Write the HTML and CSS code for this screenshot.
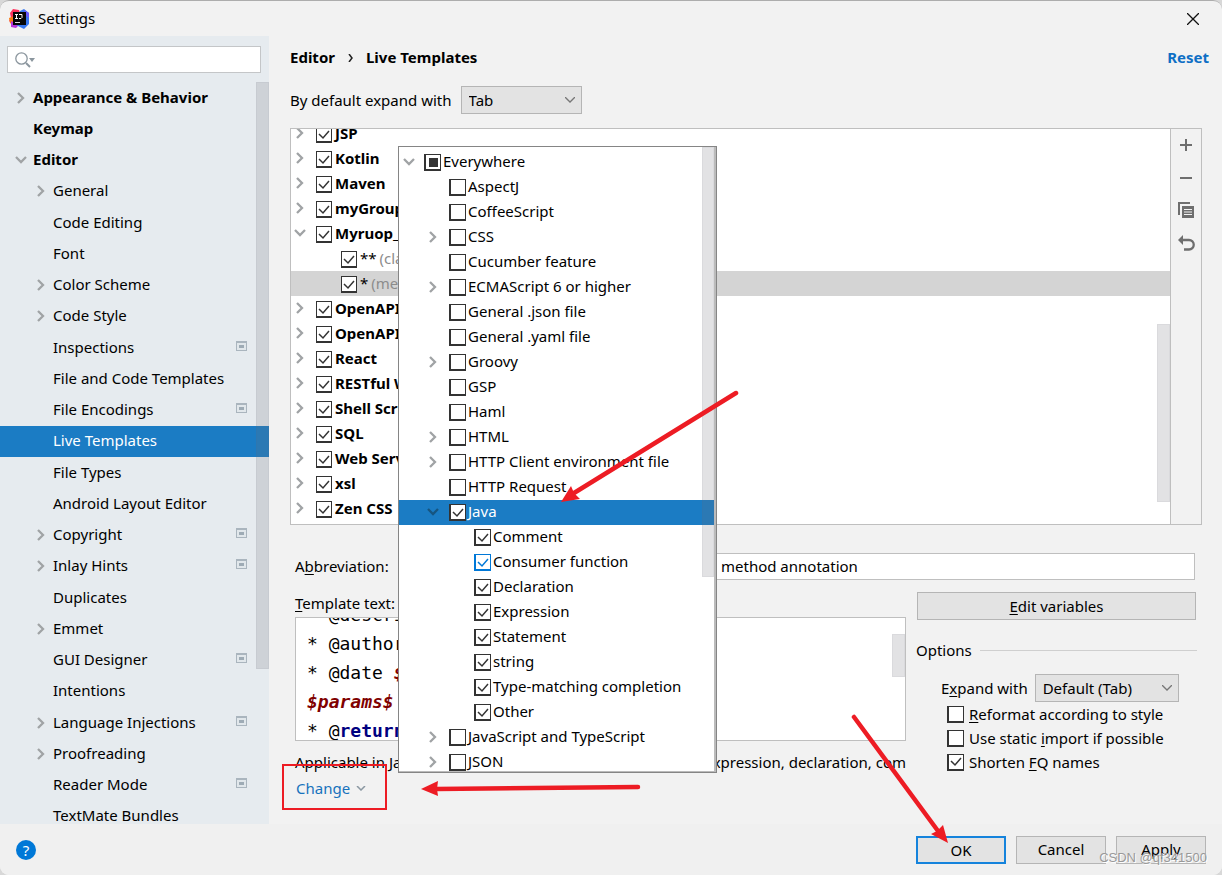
FILE: index.html
```html
<!DOCTYPE html>
<html lang="en">
<head>
<meta charset="utf-8">
<title>Settings</title>
<link rel="stylesheet" href="styles.css">
</head>
<body>
<svg width="0" height="0" class="defs" aria-hidden="true">
  <symbol id="project" viewBox="0 0 11 10"><rect width="11" height="10" fill="#aab5be"/><rect x="1" y="2" width="9" height="7" fill="#e1e7eb"/><rect x="3" y="4" width="5" height="3" fill="#9eabb5"/></symbol>
</svg>
<div class="window">
  <header class="titlebar">
    <svg class="logo" width="22" height="22" viewBox="0 0 22 22" aria-hidden="true">
      <path d="M2 5 5 1l6 1 2 6-8 8-4-3 2-3z" fill="#fe315d"/>
      <path d="m1 10 5-2v10l-4-3z" fill="#f97a12"/>
      <path d="m3 13 8 4-3 3-5-1z" fill="#b535d9"/>
      <path d="m12 3 4-2 5 4v11l-5 5-8-4z" fill="#3777ef"/>
      <path d="m16 2 5 3v5l-4-3z" fill="#6b57ff"/>
      <path d="M5 4h13v13H5z" fill="#070707"/>
      <path d="M7 6.500h3M8.500 6v5M7 10.500h3M11 6.500h3v3l-1 1h-2" stroke="#fff" fill="none"/>
      <path d="M7 14.500h5" stroke="#ddd"/>
    </svg>
    <h1 class="title">Settings</h1>
    <button class="close" aria-label="Close"><svg width="12" height="12" viewBox="0 0 12 12"><path d="m0 0 12 12M12 0 0 12" stroke="#111" stroke-width="1.300"/></svg></button>
  </header>
  <div class="body">
    <nav class="sidebar" aria-label="Settings categories">
      <div class="search">
        <svg width="20" height="16" viewBox="0 0 20 16" aria-hidden="true"><circle cx="6.500" cy="6.500" r="5.700" fill="none" stroke="#8b969e" stroke-width="1.300"/><path d="m11 11 4 4" stroke="#8b969e" stroke-width="2"/><path d="M14 6h6l-3 4z" fill="#8b969e"/></svg>
        <input type="text" aria-label="Search settings">
      </div>
      <div class="nav-scroll">
        <ul class="nav">
          <li class="top shut">Appearance &amp; Behavior</li>
          <li class="top">Keymap</li>
          <li class="top open">Editor</li>
          <li class="shut">General</li>
          <li>Code Editing</li>
          <li>Font</li>
          <li class="shut">Color Scheme</li>
          <li class="shut">Code Style</li>
          <li>Inspections<svg class="badge"><use href="#project"/></svg></li>
          <li>File and Code Templates</li>
          <li>File Encodings<svg class="badge"><use href="#project"/></svg></li>
          <li class="current">Live Templates</li>
          <li>File Types</li>
          <li>Android Layout Editor</li>
          <li class="shut">Copyright<svg class="badge"><use href="#project"/></svg></li>
          <li class="shut">Inlay Hints<svg class="badge"><use href="#project"/></svg></li>
          <li>Duplicates</li>
          <li class="shut">Emmet</li>
          <li>GUI Designer<svg class="badge"><use href="#project"/></svg></li>
          <li>Intentions</li>
          <li class="shut">Language Injections<svg class="badge"><use href="#project"/></svg></li>
          <li class="shut">Proofreading</li>
          <li>Reader Mode<svg class="badge"><use href="#project"/></svg></li>
          <li>TextMate Bundles</li>
        </ul>
        <div class="thumb nav-thumb"></div>
      </div>
    </nav>
    <main class="content">
      <div class="crumbs">
        <strong>Editor</strong>
        <svg width="5" height="8" viewBox="0 0 5 8" aria-hidden="true"><path d="m1 0 3 4-3 4" fill="none" stroke="#222" stroke-width="1.500"/></svg>
        <strong>Live Templates</strong>
        <a class="reset" href="#">Reset</a>
      </div>
      <div class="expand">
        <label for="expand">By default expand with</label>
        <select id="expand" class="select tab-select"><option>Tab</option></select>
      </div>
      <section class="templates">
        <div class="tree-view">
          <ul class="tree">
            <li class="shut"><label><input type="checkbox" checked>JSP</label></li>
            <li class="shut"><label><input type="checkbox" checked>Kotlin</label></li>
            <li class="shut"><label><input type="checkbox" checked>Maven</label></li>
            <li class="shut"><label><input type="checkbox" checked>myGroup</label></li>
            <li class="open"><label><input type="checkbox" checked>Myruop_1</label></li>
            <li class="leaf"><label><input type="checkbox" checked>**<span class="note">(class annotation)</span></label></li>
            <li class="leaf chosen"><label><input type="checkbox" checked>*<span class="note">(method annotation)</span></label></li>
            <li class="shut"><label><input type="checkbox" checked>OpenAPI</label></li>
            <li class="shut"><label><input type="checkbox" checked>OpenAPI</label></li>
            <li class="shut"><label><input type="checkbox" checked>React</label></li>
            <li class="shut"><label><input type="checkbox" checked>RESTful Web</label></li>
            <li class="shut"><label><input type="checkbox" checked>Shell Script</label></li>
            <li class="shut"><label><input type="checkbox" checked>SQL</label></li>
            <li class="shut"><label><input type="checkbox" checked>Web Services</label></li>
            <li class="shut"><label><input type="checkbox" checked>xsl</label></li>
            <li class="shut"><label><input type="checkbox" checked>Zen CSS</label></li>
          </ul>
          <div class="thumb tree-thumb"></div>
        </div>
        <div class="tools">
          <button aria-label="Add"><svg width="16" height="16" viewBox="0 0 16 16"><path d="M8 2v12M2 8h12" stroke="#6e6e6e" stroke-width="2"/></svg></button>
          <button aria-label="Remove"><svg width="16" height="16" viewBox="0 0 16 16"><path d="M2 8h12" stroke="#6e6e6e" stroke-width="2"/></svg></button>
          <button aria-label="Duplicate"><svg width="16" height="16" viewBox="0 0 16 16"><path d="M1 12V0h11" fill="none" stroke="#6e6e6e" stroke-width="2"/><path d="M4 3h12v12H4z" fill="#6e6e6e"/><path d="M6 6.500h8M6 9h8M6 11.500h8" stroke="#f2f2f2"/></svg></button>
          <button aria-label="Revert"><svg width="16" height="16" viewBox="0 0 16 16"><path d="M5 4h6a4.700 4.700 0 0 1 0 9.500H6" fill="none" stroke="#6e6e6e" stroke-width="2.300"/><path d="M0 4 5 -1v10z" fill="#6e6e6e"/></svg></button>
        </div>
      </section>
      <div class="abbr">
        <label for="desc"><span>A<u>b</u>breviation:</span></label>
        <input id="desc" type="text" value="method annotation">
      </div>
      <div class="lower">
        <section class="template">
          <h2 class="label"><u>T</u>emplate text:</h2>
          <div class="editor">
            <div class="code"><div>* @description</div><div>* @author</div><div>* @date <b><i>$date$</i></b></div><div><b><i>$params$</i></b></div><div>* @<strong>return</strong></div></div>
            <div class="thumb editor-thumb"></div>
          </div>
          <p class="applicable"><span>Applicable in Java;</span><span>Java: statement, expression, declaration, com</span></p>
          <button class="change">Change<svg width="10" height="5" viewBox="0 0 10 5" aria-hidden="true"><path d="m1 0 4 4 4-4" fill="none" stroke="#8b98a2" stroke-width="1.500"/></svg></button>
        </section>
        <section class="options">
          <button class="button edit"><span><u>E</u>dit variables</span></button>
          <h2 class="legend">Options</h2>
          <div class="with"><label for="with">E<u>x</u>pand with</label><select id="with" class="select"><option>Default (Tab)</option></select></div>
          <label class="option"><input type="checkbox"><span><u>R</u>eformat according to style</span></label>
          <label class="option"><input type="checkbox"><span>Use static <u>i</u>mport if possible</span></label>
          <label class="option"><input type="checkbox" checked><span>Shorten <u>F</u>Q names</span></label>
        </section>
      </div>
    </main>
  </div>
  <footer class="footer">
    <button class="help" aria-label="Help">?</button>
    <button class="button ok">OK</button>
    <button class="button">Cancel</button>
    <button class="button">Apply</button>
  </footer>
  <div class="popup">
    <ul class="tree contexts">
      <li class="root open"><label><input type="checkbox" class="mixed">Everywhere</label></li>
      <li><label><input type="checkbox">AspectJ</label></li>
      <li><label><input type="checkbox">CoffeeScript</label></li>
      <li class="shut"><label><input type="checkbox">CSS</label></li>
      <li><label><input type="checkbox">Cucumber feature</label></li>
      <li class="shut"><label><input type="checkbox">ECMAScript 6 or higher</label></li>
      <li><label><input type="checkbox">General .json file</label></li>
      <li><label><input type="checkbox">General .yaml file</label></li>
      <li class="shut"><label><input type="checkbox">Groovy</label></li>
      <li><label><input type="checkbox">GSP</label></li>
      <li><label><input type="checkbox">Haml</label></li>
      <li class="shut"><label><input type="checkbox">HTML</label></li>
      <li class="shut"><label><input type="checkbox">HTTP Client environment file</label></li>
      <li><label><input type="checkbox">HTTP Request</label></li>
      <li class="open picked"><label><input type="checkbox" checked>Java</label></li>
      <li class="deep"><label><input type="checkbox" checked>Comment</label></li>
      <li class="deep"><label><input type="checkbox" checked class="hot">Consumer function</label></li>
      <li class="deep"><label><input type="checkbox" checked>Declaration</label></li>
      <li class="deep"><label><input type="checkbox" checked>Expression</label></li>
      <li class="deep"><label><input type="checkbox" checked>Statement</label></li>
      <li class="deep"><label><input type="checkbox" checked>string</label></li>
      <li class="deep"><label><input type="checkbox" checked>Type-matching completion</label></li>
      <li class="deep"><label><input type="checkbox" checked>Other</label></li>
      <li class="shut"><label><input type="checkbox">JavaScript and TypeScript</label></li>
      <li class="shut"><label><input type="checkbox">JSON</label></li>
    </ul>
    <div class="thumb popup-thumb"></div>
  </div>
  <svg class="marks" width="1222" height="875" viewBox="0 0 1222 875" aria-hidden="true">
    <g fill="#ed1c24" stroke="#ed1c24" stroke-linecap="round">
      <rect x="283" y="765" width="103" height="44" fill="none" stroke-width="2"/>
      <path d="M736 393 574 493M638 787 436 789M854 717 938 831" fill="none" stroke-width="4.500"/>
      <path d="m561 502 10-16 3 7 6 6zM421 789l17-8-1 8 1 7zM948 843l-17-9 6-3 6-6z" stroke="none"/>
    </g>
  </svg>
  <div class="watermark">CSDN @qf341500</div>
</div>
</body>
</html>
```
FILE: styles.css
```css
* { box-sizing: border-box; }
body {
  margin: 0;
  background: #d8d8d8;
  font: 15px/25px "Noto Sans", "Open Sans", sans-serif;
  color: #000;
}
ul { margin: 0; padding: 0; list-style: none; }
h1, h2, p { margin: 0; font-size: inherit; font-weight: 400; }
button, input, select { font: inherit; color: inherit; border-radius: 0; margin: 0; padding: 0; }
button { background: none; border: 0; }
u { text-underline-offset: 2px; }
.defs { position: absolute; }

.window {
  position: relative;
  min-height: 100vh;
  display: flex;
  flex-direction: column;
  background: #f2f2f2;
  border-top: 1px solid #adadad;
  border-radius: 9px;
  overflow: hidden;
}
.titlebar { display: flex; align-items: center; height: 35px; padding: 0 23px 0 8px; }
.title { flex: 1; margin-left: 8px; }
.close { display: flex; }

.body { flex: 1; display: flex; }
.sidebar { width: 269px; background: #e6ebef; display: flex; flex-direction: column; }
.search {
  display: flex;
  align-items: center;
  height: 27px;
  margin: 10px 8px 9px 7px;
  padding-left: 7px;
  background: #fff;
  border: 1px solid #c4c6c8;
}
.search input { flex: 1; min-width: 0; border: 0; outline: 0; background: none; }
.nav-scroll { position: relative; flex: 1 1 0px; min-height: 0; contain: size; overflow: hidden; }
.nav li { position: relative; display: flex; align-items: center; height: 31px; padding: 0 22px 2px 53px; }
.nav li:nth-child(4n) { margin-bottom: 1px; }
.nav { padding-top: 1px; }
.nav .top { padding-left: 33px; font-weight: 700; }
.nav .current { background: #1b7cc4; color: #fff; }
.badge { width: 11px; height: 10px; margin: 0 0 3px auto; }
.thumb { position: absolute; right: 0; background: rgba(110, 110, 118, .2); border: 1px solid rgba(110, 110, 118, .06); }
.nav-thumb { top: 0; width: 13px; height: 587px; }

.shut::before, .open::before {
  content: "";
  position: absolute;
  width: 12px;
  height: 12px;
  background: center no-repeat;
}
.shut::before { background-image: url("data:image/svg+xml,%3Csvg xmlns='http://www.w3.org/2000/svg' width='12' height='12'%3E%3Cpath d='m3 1 5 5-5 5' fill='none' stroke='%23a0a3a5' stroke-width='2.300'/%3E%3C/svg%3E"); }
.open::before { background-image: url("data:image/svg+xml,%3Csvg xmlns='http://www.w3.org/2000/svg' width='12' height='12'%3E%3Cpath d='m1 3 5 5 5-5' fill='none' stroke='%23a0a3a5' stroke-width='2.300'/%3E%3C/svg%3E"); }
.nav li::before { left: 35px; }
.nav .top::before { left: 15px; }

.content { flex: 1; min-width: 0; display: flex; flex-direction: column; padding: 9px 20px 0 21px; }
.crumbs { display: flex; align-items: center; gap: 13px; margin-right: -7px; }
.reset { margin-left: auto; color: #0e6fc5; font-weight: 700; text-decoration: none; }
.expand { display: flex; align-items: center; gap: 9px; margin-top: 16px; }
.select {
  appearance: none;
  height: 28px;
  padding: 0 7px;
  border: 1px solid #b5b5b5;
  background: #e3e3e3 url("data:image/svg+xml,%3Csvg xmlns='http://www.w3.org/2000/svg' width='10' height='6'%3E%3Cpath d='m0 0 5 5 5-5' fill='none' stroke='%23777' stroke-width='1.300'/%3E%3C/svg%3E") right 6px center no-repeat;
}
.tab-select { width: 121px; }

.templates { display: flex; height: 397px; margin-top: 14px; border: 1px solid #bfbfbf; }
.tree-view { position: relative; flex: 1; background: #fff; overflow: hidden; }
.tree-view .tree { margin-top: -8px; }
.tree li { position: relative; height: 25px; padding-left: 25px; font-weight: 700; }
.tree label { display: flex; gap: 3px; white-space: pre; }
.tree li::before { left: 3px; top: 6px; }
.tree .leaf { padding-left: 50px; font-weight: 400; }
.tree .chosen { background: #d4d4d4; }
.note { color: #8c8c8c; }
.tree-thumb { top: 195px; width: 13px; height: 178px; }
.tools { display: flex; flex-direction: column; align-items: center; gap: 17px; width: 31px; padding-top: 8px; border-left: 1px solid #bfbfbf; }
.tools button { display: flex; }
.tools svg { overflow: visible; }

input[type="checkbox"] {
  appearance: none;
  flex: none;
  width: 16px;
  height: 17px;
  border: 1px solid #333;
  border-bottom-width: 2px;
  background: #fff center no-repeat;
}
input[type="checkbox"]:checked { background-image: url("data:image/svg+xml,%3Csvg xmlns='http://www.w3.org/2000/svg' width='14' height='13'%3E%3Cpath d='m2 6 4 4 6-7' fill='none' stroke='%23333' stroke-width='1.500'/%3E%3C/svg%3E"); }
.tree input[type="checkbox"] { margin-top: 5px; }

.abbr { display: flex; align-items: center; margin: 28px 7px 0 5px; }
.abbr label { width: 135px; }
.abbr input { flex: 1; min-width: 0; height: 27px; padding: 0 0 2px 290px; background: #fff; border: 1px solid #bfbfbf; outline: 0; }
.lower { display: flex; gap: 10px; margin: 12px 5px 0; }
.template { flex: 1; min-width: 0; }
.label { height: 25px; line-height: 22px; }
.editor { position: relative; height: 124px; background: #fff; border: 1px solid #bfbfbf; overflow: hidden; }
.code { margin: -18px 0 0 11px; font: 18px/29px "DejaVu Sans Mono", monospace; }
.code i { color: #800000; }
.code strong { color: #000080; }
.editor-thumb { top: 16px; width: 13px; height: 43px; }
.applicable { display: flex; justify-content: space-between; margin-top: 9px; white-space: nowrap; }
.change { display: flex; align-items: center; gap: 6px; margin-top: 1px; padding-left: 1px; color: #1772bd; }
.button { height: 28px; min-width: 90px; border: 1px solid #b5b5b5; background: #e3e3e3; }
.options { width: 281px; display: flex; flex-direction: column; }
.edit { margin: 0 1px; }
.legend { display: flex; align-items: center; gap: 8px; margin-top: 18px; }
.legend::after { content: ""; flex: 1; border-top: 1px solid #cfcfcf; }
.with { display: flex; align-items: center; gap: 7px; margin: 11px 0 0 25px; }
.with .select { width: 144px; }
.option { display: flex; align-items: center; gap: 5px; height: 24px; margin-left: 31px; }

.footer { display: flex; align-items: center; gap: 10px; height: 51px; padding: 0 16px; background: #f0f0f0; }
.footer .button { padding-bottom: 2px; }
.help { width: 20px; height: 20px; margin-right: auto; border-radius: 50%; background: #0078d7; color: #fff; line-height: 20px; }
.footer .ok { border: 2px solid #1583dc; }

.popup {
  position: absolute;
  left: 398px;
  top: 145px;
  width: 319px;
  height: 627px;
  overflow: hidden;
  background: #fff;
  border: 1px solid #858585;
  box-shadow: inset -2px -1px #bbb;
}
.contexts { margin-top: 3px; }
.contexts li { padding-left: 50px; margin-right: 2px; font-weight: 400; line-height: 23px; }
.contexts .root { padding-left: 25px; }
.contexts .deep { padding-left: 75px; }
.contexts li::before { left: 28px; }
.contexts .root::before { left: 4px; }
.contexts label { gap: 2px; }
.contexts input[type="checkbox"], .option input[type="checkbox"] { width: 17px; border-left-width: 2px; }
.contexts input[type="checkbox"] { margin-top: 4px; }
.contexts .picked { background: #1b7cc4; color: #fff; }
.contexts .picked::before { background-image: url("data:image/svg+xml,%3Csvg xmlns='http://www.w3.org/2000/svg' width='12' height='12'%3E%3Cpath d='m1 3 5 5 5-5' fill='none' stroke='%23165580' stroke-width='2.300'/%3E%3C/svg%3E"); }
.contexts .mixed { background: linear-gradient(#333, #333) center / 9px 9px no-repeat #fff; }
.contexts .hot { border-color: #0078d7; }
.contexts .hot:checked { background-image: url("data:image/svg+xml,%3Csvg xmlns='http://www.w3.org/2000/svg' width='14' height='13'%3E%3Cpath d='m2 6 4 4 6-7' fill='none' stroke='%230078d7' stroke-width='1.500'/%3E%3C/svg%3E"); }
.popup-thumb { top: 0; right: 2px; width: 12px; height: 430px; }

.marks { position: absolute; left: 0; top: -1px; pointer-events: none; }
.watermark { position: absolute; right: 15px; bottom: 5px; font: 13px/24px "Liberation Sans", sans-serif; color: #999; text-shadow: 1px 1px #fff; }
```
